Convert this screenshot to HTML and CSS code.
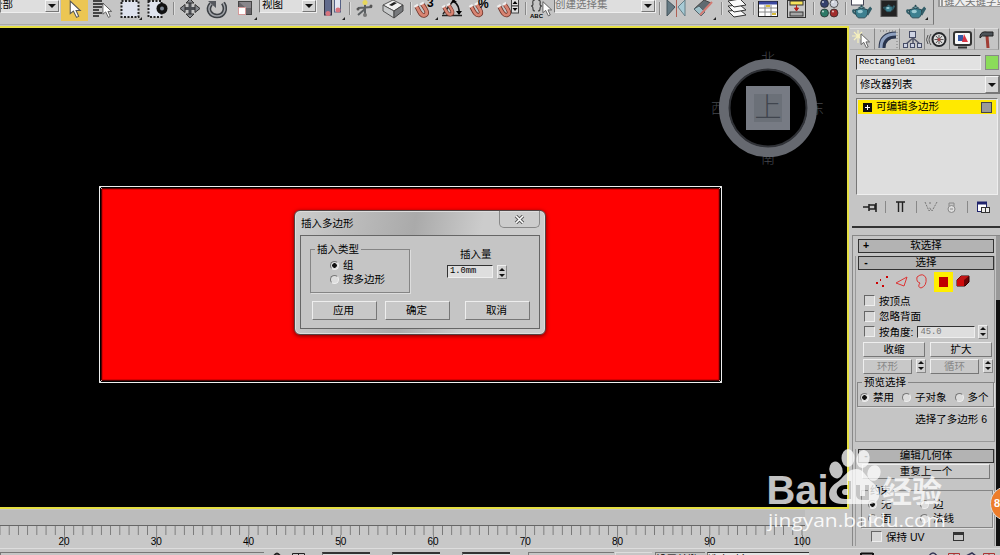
FILE: index.html
```html
<!DOCTYPE html>
<html lang="zh">
<head>
  <meta charset="UTF-8">
  <title>3ds Max</title>
  <link rel="stylesheet" href="styles.css">
</head>
<body>
  <svg class="defs" width="0" height="0">
    <defs>
      <symbol id="magnet" viewBox="0 0 20 20">
        <path d="M4 6 C7 12 9 17 13 16 C18 14 14 9 10 3" fill="none" stroke="#6d3228" stroke-width="5"/>
        <path d="M4 6 C7 12 9 17 13 16 C18 14 14 9 10 3" fill="none" stroke="#d88472" stroke-width="3.200"/>
        <path d="M1.500 6.500l4-2.500M8 4l4-2.500" stroke="#eee" stroke-width="2.500"/>
      </symbol>
      <symbol id="teapot" viewBox="0 0 22 16">
        <path d="M4 7 C0 5 0 9 5 11 M16 9 L20 4 L21 5 L17 12" fill="none" stroke="#315d68" stroke-width="2"/>
        <path d="M4 6 Q11 3 17 6 Q18 12 14 15 H7 Q3 12 4 6z" fill="#3d8090" stroke="#244650"/>
        <ellipse cx="9" cy="8" rx="3" ry="2" fill="#9ccbd3"/>
        <path d="M7 4 Q10.500 1 14 4" fill="#5a98a5" stroke="#244650"/>
        <circle cx="10.500" cy="1.500" r="1" fill="#244650"/>
      </symbol>
      <symbol id="cursor" viewBox="0 0 12 18">
        <path d="M1 1 V13 L4 10.500 L7 16.500 L9 15.500 L6.500 10 H10.500z" fill="#fff" stroke="#555" stroke-width="1"/>
      </symbol>
    </defs>
  </svg>

  <div class="app">
    <header class="topbar">
      <div class="toolbar">
        <div class="combo combo-filter"><span>全部</span><i class="drop"></i></div>
        <div class="tool active"><svg width="27" height="22" viewBox="0 0 27 22"><use href="#cursor" x="8" y="0" width="13" height="19"/></svg></div>
        <svg width="27" height="25"><path d="M5 1h9M5 4h11M5 7h9M5 10h6M5 13h9M5 16h6" stroke="#444" stroke-width="2"/><use href="#cursor" x="14" y="2" width="11" height="17"/></svg>
        <svg width="28" height="25"><rect x="6.500" y="1" width="17" height="16" fill="#dfe3ee" stroke="#222" stroke-width="2" stroke-dasharray="2 1.500"/><path d="M27 17v3h-3z" fill="#222"/></svg>
        <svg width="27" height="25"><rect x="5.500" y="1" width="13" height="16" fill="#dfe3ee" stroke="#222" stroke-width="2" stroke-dasharray="2 1.500"/><circle cx="19" cy="8.500" r="5.500" fill="#111"/><circle cx="19" cy="8.500" r="2" fill="#7d8794"/></svg>
        <i class="sep"></i>
        <svg width="28" height="25"><path d="M14 0v17M5 8.500h18" stroke="#4a4d52" stroke-width="3"/><path d="M14 18l-4-4h8zM14-1l-4 4h8zM4 8.500l5-4v8zM24 8.500l-5-4v8z" fill="#85888e" stroke="#333"/></svg>
        <svg width="27" height="25"><path d="M7 4 C2 10 7 16 13 16 C20 16 23 9 19 3" fill="none" stroke="#3c4045" stroke-width="4.500"/><path d="M7 4 C2 10 7 16 13 16 C20 16 23 9 19 3" fill="none" stroke="#a1a4a9" stroke-width="1.500"/><path d="M4 1h8v7z" fill="#55585e"/></svg>
        <svg width="28" height="25"><rect x="7.500" y="1.500" width="13" height="13" fill="#68656a" stroke="#444"/><path d="M8 2h12v6h-5z" fill="#89868b"/><rect x="7.500" y="7.500" width="7" height="7" fill="#fff" stroke="#d59a9a"/><path d="M26 17v3h-3z" fill="#222"/></svg>
        <div class="combo combo-ref"><span>视图</span><i class="drop"></i></div>
        <svg width="29" height="25"><rect x="7.500" y="-2" width="7" height="17" fill="#626b8d" stroke="#334"/><rect x="17.500" y="-2" width="6" height="14" fill="#e2e5f1" stroke="#546084"/><circle cx="11" cy="13.500" r="2.500" fill="#d7737d"/><circle cx="21" cy="10" r="2.500" fill="#d7737d"/><path d="M28 17v3h-3z" fill="#222"/></svg>
        <i class="sep wide"></i>
        <svg width="26" height="25"><path d="M12 3v13M5 8l14-1M12 9l-7 6" stroke="#5c6063" stroke-width="2"/><circle cx="12" cy="2.500" r="2.500" fill="#e6d75d"/><circle cx="18" cy="6" r="1.500" fill="#555"/><circle cx="5" cy="9" r="1.500" fill="#555"/><circle cx="12" cy="15" r="2" fill="#777"/></svg>
        <svg width="28" height="25"><path d="M4 5l10-5 10 5-9 6z" fill="#f0f0f0" stroke="#555"/><path d="M4 5v6l11 7v-7z" fill="#c8cacb" stroke="#555"/><path d="M24 5v6l-9 7v-7z" fill="#77797c" stroke="#444"/><path d="M10 5l5-3 3 1-5 3z" fill="#222"/></svg>
        <i class="sep"></i>
        <svg width="27" height="25"><use href="#magnet" x="0" y="1" width="18" height="18"/><text x="14" y="7" class="glyph">3</text><path d="M25 17v3h-3z" fill="#222"/></svg>
        <svg width="27" height="25"><path d="M2 15.500h20M3 14L14 0" stroke="#222" stroke-width="1.500"/><path d="M13 1q7 4 6 13" fill="none" stroke="#111" stroke-width="1.500"/><path d="M11 3l2-4 4 3zM16 11h6l-3 4z"/><use href="#magnet" x="1" y="2" width="15" height="16"/></svg>
        <svg width="28" height="25"><use href="#magnet" x="1" y="1" width="17" height="18"/><text x="11" y="8" class="glyph">%</text></svg>
        <svg width="27" height="25"><use href="#magnet" x="1" y="1" width="17" height="18"/><rect x="16.500" y="-1" width="7" height="7" fill="#ddd" stroke="#444"/><rect x="16.500" y="6" width="7" height="7" fill="#ddd" stroke="#444"/><path d="M17.500 4l2.500-3 2.500 3zM17.500 8h5l-2.500 3z"/></svg>
        <i class="sep"></i>
        <svg width="26" height="25"><path d="M7 0q-3 0-2 4 0 2-2 2 2 0 2 3 0 2 2 2M10 0q3 0 2 4 0 2 2 2-2 0-2 3 0 2-2 2" fill="none" stroke="#444" stroke-width="1.200"/><text x="2" y="17.500" class="abc">ABC</text><use href="#cursor" x="14" y="0" width="11" height="18"/></svg>
        <div class="combo combo-set"><span>创建选择集</span><i class="drop"></i></div>
        <i class="sep gap"></i>
        <svg width="25" height="25"><path d="M2 0l8 7-8 9z" fill="#657a84" stroke="#44545c"/><path d="M20 0l-7 7 7 9z" fill="#a8cbd6" stroke="#657f88"/><path d="M11.500 0v17" stroke="#b06055"/></svg>
        <svg width="28" height="25"><path d="M4 9l10-9 7 3-11 12z" fill="#5f6a70" stroke="#444"/><path d="M4 9l5-3 6 6-4 4z" fill="#9fc1ca" stroke="#52646b"/><path d="M10 15L22 2" stroke="#d27b73" stroke-width="2"/><path d="M26 17v3h-3z" fill="#222"/></svg>
        <i class="sep"></i>
        <svg width="26" height="25"><g fill="#fafafa" stroke="#333"><path d="M4 11l12-1 6 5-12 2z"/><path d="M4 6l12-1 6 5-12 2z"/><path d="M4 1l12-2 6 6-12 2z"/></g></svg>
        <i class="sep"></i>
        <svg width="27" height="25"><rect x="2.500" y="1.500" width="19" height="15" fill="#fff" stroke="#222"/><path d="M3 3h18" stroke="#3b48a0" stroke-width="3"/><path d="M3 8h18M3 12h18M9 5v11M15 5v11" stroke="#888"/><path d="M10 6h4M16 14h4" stroke="#d8bd3a" stroke-width="2"/></svg>
        <svg width="27" height="25"><rect x="4.500" y=".5" width="18" height="17" fill="#c8c8c8" stroke="#333"/><rect x="7" y="1" width="13" height="4" fill="#f6e35c" stroke="#333"/><rect x="7" y="12" width="13" height="4" fill="#a6a6a6" stroke="#333"/><path d="M13.500 5v4M11.500 8l2 3 2-3z" fill="#b3211d" stroke="#b3211d"/></svg>
        <i class="sep"></i>
        <svg width="26" height="25"><g stroke="#222" stroke-width=".7"><circle cx="8.500" cy="3.500" r="4" fill="#35406c"/><circle cx="18" cy="3.500" r="4" fill="#cfd3dc"/><circle cx="8.500" cy="13" r="4" fill="#2d7a67"/><circle cx="18" cy="13" r="4" fill="#a22c2b"/></g><g fill="#fff" opacity=".7"><circle cx="7" cy="2" r="1"/><circle cx="17" cy="2" r="1"/><circle cx="7" cy="11.500" r="1"/><circle cx="17" cy="11.500" r="1"/></g></svg>
        <i class="sep"></i>
        <svg width="28" height="25"><rect x="3.500" y="-3" width="12" height="8" fill="#fff" stroke="#445"/><use href="#teapot" x="4" y="4" width="20" height="15"/></svg>
        <svg width="27" height="25"><rect x="5" y=".5" width="16" height="16" fill="#222" stroke="#555"/><use href="#teapot" x="7" y="3" width="12" height="10"/></svg>
        <svg width="30" height="25"><use href="#teapot" x="3" y="4" width="20" height="15"/><path d="M25 17v3h-3z" fill="#222"/></svg>
      </div>
      <div class="search"><span>键入关键字或短语</span></div>
    </header>

    <div class="workspace">
      <main class="viewport">
        <svg class="mesh" width="624" height="198">
          <rect x=".5" y=".5" width="622" height="196" fill="#000" stroke="#eee"/>
          <path d="M0 0l4 4M623 0l-4 4M0 197l4-4M623 197l-4-4" stroke="#ddd"/>
          <rect x="3" y="3" width="617" height="191" fill="#f00" stroke="#a00"/>
        </svg>

        <svg class="viewcube" width="124" height="124" viewBox="0 0 124 124">
          <g class="compass">
            <text x="62" y="17">北</text><text x="12" y="67">西</text><text x="111" y="67">东</text><text x="62" y="117">南</text>
          </g>
          <circle cx="62" cy="62" r="44" fill="none" stroke="#666970" stroke-width="10"/>
          <circle cx="62" cy="62" r="38.500" fill="none" stroke="#303237" stroke-width="2"/>
          <rect x="40" y="40" width="44" height="44" fill="#777b84"/>
          <rect x="48" y="48" width="28" height="28" fill="#6b7078"/>
          <text x="62" y="71" class="face">上</text>
        </svg>

        <div class="dialog">
          <div class="dialog-title"><span>插入多边形</span>
            <div class="close"><svg width="12" height="9"><path d="M2 1l7 7M9 1L2 8" stroke="#555" stroke-width="3.400"/><path d="M2 1l7 7M9 1L2 8" stroke="#fff" stroke-width="1.600"/></svg></div>
          </div>
          <div class="dialog-body">
            <div class="dialog-fields">
              <div class="group insert-type">
                <span class="legend">插入类型</span>
                <label><i class="radio on"></i>组</label>
                <label><i class="radio"></i>按多边形</label>
              </div>
              <div class="amount">
                <span>插入量</span>
                <div class="amount-row"><span class="field">1.0mm</span><i class="spin"></i></div>
              </div>
            </div>
            <div class="dialog-buttons">
              <span class="btn">应用</span><span class="btn">确定</span><span class="btn last">取消</span>
            </div>
          </div>
        </div>
      </main>

      <aside class="panel">
        <nav class="tabs">
          <svg width="25" height="22"><path d="M8 1v13M2 7h12M4 3l8 8M12 3l-8 8" stroke="#f6f0bd" stroke-width="1.200"/><use href="#cursor" x="10" y="4" width="11" height="16"/></svg>
          <svg width="25" height="22"><path d="M7 19Q7 6 21 6" fill="none" stroke="#29344c" stroke-width="7"/><path d="M6 19Q6 5 21 5" fill="none" stroke="#8fa1c0" stroke-width="3"/><path d="M5 2h17v17" fill="none" stroke="#777" stroke-dasharray="1 2"/></svg>
          <svg width="25" height="22"><path d="M13 7v7M5 16l8-7 8 7" fill="none" stroke="#52566a" stroke-width="1.500"/><g fill="#ced3e3" stroke="#474d67"><rect x="9.500" y="2.500" width="6" height="6"/><rect x="3.500" y="14.500" width="4" height="4"/><rect x="10.500" y="14.500" width="4" height="4"/><rect x="17.500" y="14.500" width="4" height="4"/></g></svg>
          <svg width="25" height="22"><path d="M6 5q-4 6 0 11M3 6q-3 5 0 9" fill="none" stroke="#555"/><circle cx="14" cy="10.500" r="6.500" fill="#ddd" stroke="#25272a" stroke-width="2"/><path d="M14 6v9M9.500 10.500h9M11 7l6 7M17 7l-6 7" stroke="#555"/><circle cx="14" cy="10.500" r="1.500" fill="#a44"/></svg>
          <svg width="25" height="22"><rect x="4" y="3" width="17" height="13" rx="2" fill="#fafafa" stroke="#333" stroke-width="2"/><path d="M8 6h5v6H8z" fill="#3659a5"/><path d="M14 5l4 8h-6z" fill="#d83344"/><path d="M8 18.500h9" stroke="#333" stroke-width="2"/></svg>
          <svg width="24" height="22"><path d="M12 7l1 12" stroke="#a03d35" stroke-width="3"/><path d="M5 7q1-5 7-4h6v4h-8q-3-1-5 2z" fill="#4c5358" stroke="#222"/></svg>
        </nav>

        <div class="name-row"><span class="name-field">Rectangle01</span><i class="swatch"></i></div>
        <div class="modifier-list"><span>修改器列表</span><i class="drop"></i></div>
        <div class="stack"><div class="stack-item"><i class="expand"></i><span>可编辑多边形</span><i class="state"></i></div></div>

        <div class="stack-tools">
          <svg width="151" height="18">
            <path d="M12 9h6M18 6v7M18 7h6v4h-6M25 5v9" fill="none" stroke="#222" stroke-width="1.600"/>
            <path d="M34.500 3v12M65.500 3v12M116.500 3v12" stroke="#888"/>
            <path d="M45 4h9M47.500 4v10M51.500 4v10" stroke="#222" stroke-width="1.400" fill="none"/>
            <path d="M74 4l4 9 2-2M86 4l-5 9-3-4M79 6v-2" fill="none" stroke="#777" stroke-dasharray="2 1"/>
            <circle cx="100.500" cy="11" r="3.500" fill="#ddd" stroke="#888"/><path d="M98 8V5h5v3M99 11h3" fill="none" stroke="#888"/>
            <rect x="126.500" y="4.500" width="9" height="9" fill="#fff" stroke="#20246c"/><path d="M126 5h10" stroke="#20246c" stroke-width="3"/><rect x="130.500" y="9.500" width="4" height="5" fill="#eee" stroke="#333"/><rect x="134.500" y="9.500" width="4" height="5" fill="#eee" stroke="#333"/>
          </svg>
        </div>

        <div class="rollouts">
          <div class="rollout-list">
            <div class="rollup"><b>+</b>软选择</div>
            <section class="rollout selection">
              <div class="rollup"><b>-</b>选择</div>
              <div class="levels">
                <svg width="20" height="19"><path d="M4 11h2M10 14h2M14 5h2M8 8h1" stroke="#c00" stroke-width="2"/></svg>
                <svg width="20" height="19"><path d="M4 11l11-6-3 9z" fill="none" stroke="#d33"/></svg>
                <svg width="20" height="19"><path d="M5 5q6-5 9 1 1 8-5 10-4-1-1-5-4-1-3-6z" fill="none" stroke="#d33"/></svg>
                <i class="level-on"></i>
                <svg width="20" height="19"><path d="M4 8l4-4h8v6l-4 4H4z" fill="#6d0505" stroke="#300"/><path d="M4 8h7v6H4z" fill="#d00b0b"/><path d="M4 8l4-4h8l-5 4z" fill="#c01515"/></svg>
              </div>
              <label class="check-row"><i class="check"></i>按顶点</label>
              <label class="check-row"><i class="check"></i>忽略背面</label>
              <label class="check-row"><i class="check"></i>按角度:<span class="field angle">45.0</span><i class="spin"></i></label>
              <div class="pair"><span class="btn">收缩</span><span class="btn">扩大</span></div>
              <div class="pair loop"><span class="btn off">环形</span><i class="spin"></i><span class="btn off">循环</span><i class="spin"></i></div>
              <div class="group preview">
                <span class="legend">预览选择</span>
                <label><i class="radio on"></i>禁用</label><label><i class="radio"></i>子对象</label><label><i class="radio"></i>多个</label>
              </div>
              <div class="count">选择了多边形 6</div>
            </section>
            <section class="rollout geometry">
              <div class="rollup"><b>-</b>编辑几何体</div>
              <span class="btn repeat">重复上一个</span>
              <div class="group constraint">
                <span class="legend">约束</span>
                <label><i class="radio on"></i>无</label><label><i class="radio"></i>边</label>
                <label><i class="radio"></i>面</label><label><i class="radio"></i>法线</label>
              </div>
              <label class="check-row uv"><i class="check"></i>保持 UV<i class="uv-btn"></i></label>
            </section>
          </div>
          <div class="scroll"><i></i></div>
        </div>
      </aside>
    </div>

    <footer class="bottom">
      <div class="ruler">
        <div class="ticks"></div>
        <div class="numbers"><span>20</span><span>30</span><span>40</span><span>50</span><span>60</span><span>70</span><span>80</span><span>90</span><span>100</span></div>
      </div>
      <div class="status">
        <i class="line prompt"></i>
        <svg width="46" height="5"><path d="M2 4q3-5 6 0" fill="none" stroke="#222" stroke-width="2"/><path d="M20.500 5V1.500h12V5M26.500 1v4" fill="none" stroke="#222"/></svg>
        <i class="line coord"></i><i class="line coord"></i><i class="line coord"></i>
        <span class="line key">Auto Key</span><i class="line blank"></i><span class="line setkey">设置关键点</span>
        <span class="line picked">选定对象</span>
        <svg width="140" height="4"><path d="M2 1.500h12M2 1v3M14 1v3" stroke="#111" stroke-width="2" fill="none"/><path d="M70 4q4-6 8 0M107 4l6-3 4 3" fill="none" stroke="#335" stroke-width="1.500"/><path d="M89.500 4V1.500h11V4M95 1v3M124.500 4V1.500h11V4M130 1v3" stroke="#a33" fill="none"/></svg>
      </div>
    </footer>

    <div class="badge">8</div>

    <svg class="watermark" width="190" height="90" viewBox="0 0 190 90">
      <g fill="#fff" opacity=".76">
        <text x="1.500" y="59" class="wm-latin" textLength="62" lengthAdjust="spacingAndGlyphs">Bai</text>
        <ellipse cx="71" cy="25" rx="6.500" ry="8.500" transform="rotate(-15 71 25)"/>
        <ellipse cx="83" cy="13" rx="6.500" ry="9"/>
        <ellipse cx="98" cy="14" rx="6.500" ry="9" transform="rotate(12 98 14)"/>
        <ellipse cx="109" cy="28" rx="6.500" ry="8" transform="rotate(20 109 28)"/>
        <path fill-rule="evenodd" d="M91 24c8 0 10 8 16 13 10 7 10 21-2 22H77c-16 0-16-15-6-21 8-5 11-14 20-14zM80 40c-11 0-11 14 0 14h6V36h-3v4zM80 44h3v6h-3c-4 0-4-6 0-6zM91 40v9c0 5 3 6 9 6h4V40h-4v11h-5V40z"/>
        <text x="117" y="57" class="wm-cjk">经验</text>
      </g>
      <text x="3" y="82" class="wm-url" textLength="178" lengthAdjust="spacingAndGlyphs">jingyan.baidu.com</text>
    </svg>
  </div>
</body>
</html>
```

FILE: styles.css
```css
* {
  box-sizing: border-box;
}

body {
  margin: 0;
  background: #c5c5c5;
  color: #000;
  font: 10.5px/12px "Liberation Sans", "Noto Sans CJK SC", sans-serif;
}

.defs {
  position: absolute;
}

svg {
  display: block;
  flex: none;
}

i {
  flex: none;
  font-style: normal;
}

.app {
  position: relative;
  width: 1000px;
  height: 555px;
  overflow: hidden;
  display: flex;
  flex-direction: column;
}

/* Top toolbar */
.topbar {
  display: flex;
  height: 26px;
  flex: none;
}

.toolbar {
  display: flex;
  width: 934px;
  height: 25px;
  overflow: hidden;
  border-right: 1px solid #777;
  border-bottom: 1px solid #aaa;
}

.combo {
  display: flex;
  justify-content: space-between;
  height: 13px;
  flex: none;
  background: #dedede;
  border: 1px solid #777;
  border-top: 0;
  border-right-color: #eee;
  border-bottom-color: #eee;
  overflow: hidden;
  white-space: nowrap;
}

.combo span {
  margin-top: -2px;
}

.combo-filter {
  width: 60px;
  margin-right: 1px;
}

.combo-filter span {
  margin-left: -9px;
}

.combo-ref {
  width: 58px;
  padding-left: 2px;
}

.combo-set {
  width: 102px;
  color: #777;
}

.drop {
  width: 14px;
  background: #d4d4d4;
  border: 1px solid #777;
  border-top-color: #f4f4f4;
  border-left-color: #f4f4f4;
  display: flex;
  align-items: center;
  justify-content: center;
}

.drop::before {
  content: "";
  border: 4px solid transparent;
  border-top-color: #111;
  border-bottom: 0;
}

.tool {
  flex: none;
}

.active {
  height: 21px;
  background: #ecc653;
}

.sep {
  width: 6px;
  height: 13px;
  margin-top: 2px;
  background: linear-gradient(90deg, transparent 3px, #888 3px, #888 4px, #ddd 4px, #ddd 5px, transparent 5px);
}

.sep.wide {
  width: 7px;
}

.sep.gap {
  width: 9px;
}

.glyph {
  font: bold 12px "Liberation Sans", sans-serif;
}

.abc {
  font: bold 6px "Liberation Sans", sans-serif;
}

.search {
  margin-left: 4px;
  width: 62px;
  height: 7px;
  padding-left: 1px;
  border-bottom: 1px solid #999;
  border-left: 5px double #999;
  background: #eee;
  color: #777;
  overflow: hidden;
  white-space: nowrap;
}

.search span {
  display: block;
  margin-top: -5px;
}

.workspace {
  display: flex;
  height: 484px;
  flex: none;
}

/* Viewport */
.viewport {
  position: relative;
  width: 849px;
  height: 483px;
  background: #000;
  border: solid #e5df43;
  border-width: 2px 2px 2px 0;
}

.mesh {
  position: absolute;
  left: 99px;
  top: 158px;
}

.viewcube {
  position: absolute;
  left: 706px;
  top: 18px;
}

.compass {
  fill: #46494f;
  font: 300 14px "Noto Sans CJK SC", sans-serif;
  text-anchor: middle;
}

.face {
  fill: #40454e;
  font: 300 27px "Noto Sans CJK SC", sans-serif;
  text-anchor: middle;
}

/* Dialog */
.dialog {
  position: absolute;
  left: 294px;
  top: 182px;
  width: 252px;
  height: 125px;
  padding: 0 5px 6px;
  border: 1px solid #544;
  border-radius: 6px;
  background: linear-gradient(100deg, #ccc, #aaa 45%, #ccc 70%);
  box-shadow: inset 0 0 0 1px #ddd, 0 1px 4px #700;
}

.dialog-title {
  display: flex;
  justify-content: space-between;
  height: 24px;
}

.dialog-title > span {
  margin: 6px 0 0 1px;
}

.close {
  width: 41px;
  height: 17px;
  border: 1px solid #888;
  border-top: 0;
  border-radius: 0 0 5px 5px;
  display: flex;
  align-items: center;
  justify-content: center;
}

.dialog-body {
  height: 94px;
  border: 1px solid #666;
  background: #c5c5c5;
}

.dialog-fields {
  display: flex;
}

.group {
  border: 1px solid #858585;
  box-shadow: 1px 1px #ddd;
}

.legend {
  display: block;
  width: max-content;
  padding: 0 2px;
  background: #c5c5c5;
}

.group label {
  display: flex;
  align-items: center;
}

.insert-type {
  width: 100px;
  height: 44px;
  margin: 13px 0 0 9px;
}

.insert-type .legend {
  margin: -7px 0 3px 4px;
}

.insert-type label {
  height: 14px;
  margin-left: 19px;
}

.radio {
  width: 9px;
  height: 9px;
  margin-right: 4px;
  border-radius: 50%;
  border: 1px solid #777;
  border-right-color: #eee;
  border-bottom-color: #eee;
  background: #ddd;
}

.radio.on {
  background: radial-gradient(circle, #111 2px, #ddd 2.6px);
}

.amount {
  margin: 12px 0 0 37px;
}

.amount > span {
  display: block;
  margin-left: 13px;
}

.amount-row {
  display: flex;
  margin-top: 5px;
}

.field {
  width: 46px;
  height: 13px;
  margin-right: 4px;
  padding-left: 2px;
  background: #dedede;
  border: 1px solid #333;
  border-right-color: #eee;
  border-bottom-color: #eee;
  font: 8.8px/11px "Liberation Mono", monospace;
}

.spin {
  width: 10px;
  height: 14px;
  background: #d0d0d0;
  border: 1px solid #eee;
  border-right-color: #888;
  border-bottom-color: #888;
  display: flex;
  flex-direction: column;
  align-items: center;
  justify-content: center;
  gap: 3px;
}

.spin::before,
.spin::after {
  content: "";
  border: 3px solid transparent;
}

.spin::before {
  border-top: 0;
  border-bottom-color: #111;
}

.spin::after {
  border-bottom: 0;
  border-top-color: #111;
}

.dialog-buttons {
  display: flex;
  gap: 8px;
  margin: 8px 0 0 11px;
}

.btn {
  display: flex;
  align-items: center;
  justify-content: center;
  padding-bottom: 1px;
  background: #c8c8c8;
  border: 1px solid #eee;
  border-right-color: #777;
  border-bottom-color: #777;
}

.dialog-buttons .btn {
  width: 65px;
  height: 19px;
  padding-right: 2px;
}

.dialog-buttons .last {
  margin-left: 7px;
}

/* Command panel */
.panel {
  width: 151px;
  height: 520px;
  overflow: hidden;
  background: #c5c5c5;
}

.tabs {
  display: flex;
  height: 23px;
  margin: 2px 0 0 1px;
}

.tabs svg {
  border-right: 1px solid #888;
  border-bottom: 1px solid #aaa;
  border-top: 1px solid #ddd;
}

.name-row {
  display: flex;
  gap: 4px;
  margin: 4px 0 0 7px;
}

.name-field {
  width: 125px;
  height: 15px;
  padding-left: 2px;
  background: #e2e2e2;
  border: 1px solid #333;
  border-right-color: #eee;
  border-bottom-color: #eee;
  font: 9px/13px "Liberation Mono", monospace;
  letter-spacing: -0.3px;
}

.swatch {
  width: 14px;
  height: 15px;
  background: #8bdc5a;
  border: 1px solid #888;
}

.modifier-list {
  display: flex;
  align-items: center;
  justify-content: space-between;
  height: 19px;
  margin: 5px 0 0 7px;
  padding-left: 3px;
  background: #dedede;
  border: 1px solid #777;
}

.modifier-list span,
.stack-item span {
  margin-top: -2px;
}

.modifier-list .drop {
  height: 17px;
}

.stack {
  height: 97px;
  width: 142px;
  margin: 4px 0 0 7px;
  padding: 1px;
  background: #dedede;
  border: 1px solid #777;
  border-right-color: #eee;
  border-bottom-color: #eee;
}

.stack-item {
  display: flex;
  align-items: center;
  height: 14px;
  background: #ffe900;
}

.expand {
  width: 9px;
  height: 9px;
  margin: 0 4px 0 5px;
  background: linear-gradient(#fff, #fff) center / 5px 1px no-repeat, linear-gradient(#fff, #fff) center / 1px 5px no-repeat, #111;
}

.state {
  width: 11px;
  height: 11px;
  margin-left: auto;
  margin-right: 4px;
  background: #999;
  border: 1px solid #444;
}

.stack-tools {
  height: 30px;
  margin: 3px 0 0 3px;
  border-bottom: 2px solid #333;
}

.stack-tools svg {
  margin-left: -1px;
}

.rollouts {
  display: flex;
  height: 312px;
  margin: 7px 0 0 3px;
  border-top: 1px solid #888;
  border-left: 1px solid #888;
  border-bottom: 1px solid #888;
  overflow: hidden;
}

.rollout-list {
  width: 143px;
  padding: 3px 1px 0 2px;
}

.rollup {
  height: 14px;
  margin: 0 1px 0 3px;
  background: #b3b3b3;
  border: 1px solid #333;
  text-align: center;
  line-height: 11px;
}

.rollup b {
  float: left;
  width: 14px;
  margin-right: -14px;
}

.rollout {
  border: 1px solid #999;
  border-top: 0;
}

.selection {
  height: 186px;
  margin-top: 3px;
}

.selection > .rollup,
.geometry > .rollup {
  margin: 0 0 0 2px;
}

.levels {
  display: flex;
  height: 20px;
  margin: 2px 0 1px 16px;
}

.level-on {
  width: 19px;
  height: 20px;
  margin-left: 2px;
  background: #c00000;
  border: 5px solid #ffee00;
}

.check-row {
  display: flex;
  align-items: center;
  height: 15.5px;
  margin-left: 8px;
}

.check {
  width: 11px;
  height: 11px;
  margin-right: 4px;
  background: #d6d6d6;
  border: 1px solid #666;
  border-right-color: #eee;
  border-bottom-color: #eee;
}

.angle {
  width: 58px;
  margin-left: 4px;
  margin-right: 3px;
  color: #777;
}

.check-row .field {
  height: 12px;
}

.pair {
  display: flex;
  gap: 5px;
  margin: 2px 0 1px 7px;
}

.pair .btn {
  width: 62px;
  height: 15px;
}

.loop {
  gap: 4px;
}

.loop .btn {
  width: 49px;
}

.off {
  color: #888;
}

.preview {
  display: flex;
  flex-wrap: wrap;
  width: 137px;
  height: 25px;
  margin-top: 8px;
  margin-left: 1px;
}

.preview .legend {
  width: auto;
  margin: -7px 80px 0 4px;
}

.preview label {
  margin: 1px 8px 0 2px;
  height: 14px;
}

.preview label + label {
  margin-left: 0;
}

.preview label:last-child {
  margin-right: 0;
}

.count {
  margin: 6px 7px 0;
  text-align: right;
}

.geometry {
  height: 110px;
  margin-top: 7px;
}

.repeat {
  width: 128px;
  height: 15px;
  margin: 1px 0 0 6px;
}

.constraint {
  display: grid;
  grid-template-columns: 52px 60px;
  grid-template-rows: 6px 14px 14px;
  height: 38px;
  width: 132px;
  margin: 11px 0 0 5px;
}

.constraint .legend {
  grid-column: 1 / 3;
  margin: -7px 0 0 6px;
}

.constraint label {
  margin-left: 6px;
}

.uv {
  margin: 1px 0 0 15px;
}

.uv-btn {
  width: 11px;
  height: 9px;
  margin-left: 28px;
  border: 1px solid #333;
  border-top-width: 3px;
}

.scroll {
  width: 4px;
  background: #111;
}

.scroll i {
  display: block;
  height: 64px;
  background: #999;
}

/* Time ruler and status line */
.bottom {
  flex: none;
  height: 45px;
}

.ruler {
  width: 805px;
  height: 38px;
  padding-top: 15px;
  background: linear-gradient(#bcbcbc 15px, #c8c8c8 15px);
}

.ticks {
  height: 10px;
  border-top: 1px solid #666;
  background: linear-gradient(90deg, #777 1px, transparent 1px) -0.5px 0 / 9.225px 100%;
}

.numbers {
  display: flex;
  margin-left: 18px;
}

.numbers span {
  width: 92.25px;
  flex: none;
  height: 12px;
  text-align: center;
  font: 10px/13px "Liberation Sans", sans-serif;
  background: linear-gradient(#888, #888) center / 1px 100% no-repeat;
}

.status {
  display: flex;
  height: 7px;
  padding-top: 3px;
  border-top: 1px solid #ddd;
  overflow: hidden;
}

.line {
  flex: none;
  height: 10px;
  border-top: 1px solid #333;
  border-left: 1px solid #777;
  overflow: hidden;
}

.prompt {
  width: 264px;
  margin-right: 8px;
  border-top-color: #777;
}

.coord {
  width: 48px;
  margin-left: 4px;
  margin-right: 18px;
  border-top-width: 2px;
  background: #ddd;
}

.key {
  width: 86px;
  border-color: #777;
}

.blank {
  width: 37px;
  margin: 0 3px 0 1px;
  border-color: #ddd;
}

.setkey {
  width: 50px;
  border-color: #777;
}

.picked {
  width: 102px;
  margin: 0 50px 0 2px;
  background: #e4e4e4;
}

.badge {
  position: absolute;
  left: 990px;
  top: 486px;
  width: 35px;
  height: 35px;
  padding-left: 3px;
  border-radius: 50%;
  border: 1px solid #ddd;
  background: #ed7d2b;
  color: #fff;
  font: bold 11px/33px "Liberation Sans", sans-serif;
}

.watermark {
  position: absolute;
  left: 765px;
  top: 445px;
}

.wm-latin {
  font: bold 40px "Liberation Sans", sans-serif;
}

.wm-cjk {
  font: bold 30px "Noto Sans CJK SC", sans-serif;
}

.wm-url {
  fill: #fff;
  opacity: 0.9;
  font: 19px "Open Sans", sans-serif;
}
```
